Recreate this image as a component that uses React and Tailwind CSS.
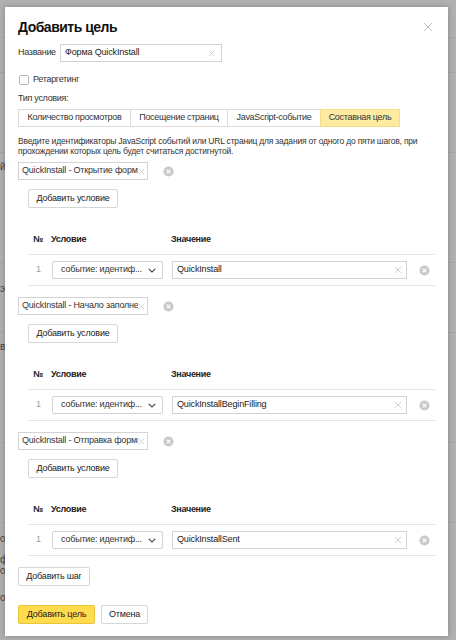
import React from 'react';

const font = { fontFamily: '"Liberation Sans", Arial, sans-serif' };

function CloseSmall({ className = '' }) {
  return (
    <svg viewBox="0 0 10 10" className={className} fill="none" stroke="currentColor" strokeWidth="1">
      <path d="M1 1L9 9M9 1L1 9" />
    </svg>
  );
}

function RemoveCircle() {
  return (
    <svg viewBox="0 0 12 12" className="w-[11px] h-[11px]">
      <circle cx="6" cy="6" r="5.5" fill="#c9c9c9" />
      <path d="M4 4L8 8M8 4L4 8" stroke="#fff" strokeWidth="1.4" />
    </svg>
  );
}

function Chevron() {
  return (
    <svg viewBox="0 0 10 6" className="w-[8px] h-[5px]" fill="none" stroke="#333" strokeWidth="1.3">
      <path d="M1 1L5 5L9 1" />
    </svg>
  );
}

function Button({ children, className = '' }) {
  return (
    <div className={`inline-flex items-center justify-center h-[19px] border border-[#d6d6d6] rounded-[2px] bg-white text-[9px] tracking-[-0.2px] text-[#222] whitespace-nowrap ${className}`}>
      {children}
    </div>
  );
}

function Step({ name, value }) {
  return (
    <div>
      <div className="flex items-center mt-[11px]">
        <div className="w-[130px] h-[18px] border border-[#d3d3d3] flex items-center pl-[3px] pr-[2px] text-[9px] tracking-[-0.2px] text-[#333] overflow-hidden">
          <span className="whitespace-nowrap overflow-hidden flex-1">{name}</span>
          <CloseSmall className="w-[7px] h-[7px] text-[#bdbdbd] shrink-0" />
        </div>
        <div className="ml-[15px] flex items-center"><RemoveCircle /></div>
      </div>
      <div className="flex">
        <Button className="mt-[9px] ml-[10px] w-[90px]">Добавить условие</Button>
      </div>
      <div className="ml-[10px] w-[407px] mt-[24px]">
        <div className="flex items-center pb-[8px] border-b border-[#e6e6e6] text-[9px] tracking-[-0.3px] font-bold text-[#222] leading-[14px]">
          <span className="ml-[5px] w-[18px]">№</span>
          <span className="w-[120px]">Условие</span>
          <span>Значение</span>
        </div>
        <div className="flex items-center h-[31px] border-b border-[#e6e6e6]">
          <span className="ml-[8px] w-[16px] text-[9px] text-[#999]">1</span>
          <div className="w-[111px] h-[18px] border border-[#d3d3d3] rounded-[2px] flex items-center pl-[8px] pr-[6px] text-[9px] tracking-[-0.2px] text-[#333]">
            <span className="flex-1 whitespace-nowrap">событие: идентиф...</span>
            <Chevron />
          </div>
          <div className="ml-[9px] w-[235px] h-[18px] border border-[#d3d3d3] flex items-center pl-[4px] pr-[4px] text-[9px] tracking-[-0.15px] text-[#222]">
            <span className="flex-1">{value}</span>
            <CloseSmall className="w-[8px] h-[8px] text-[#c4c4c4]" />
          </div>
          <div className="ml-[12px] flex items-center"><RemoveCircle /></div>
        </div>
      </div>
    </div>
  );
}

export default function App() {
  const tabs = ['Количество просмотров', 'Посещение страниц', 'JavaScript-событие', 'Составная цель'];
  const widths = ['w-[113px]', 'w-[98px]', 'w-[94px]', 'w-[80px]'];

  return (
    <div className="relative w-[456px] h-[640px] bg-[#b1b1b1] overflow-hidden" style={font}>
      {/* faded page behind the dialog */}
      <div className="flex flex-col pt-[37px]">
        <div className="h-[35px] border-t border-[#a6a6a6]" />
        <div className="h-[80px] border-t border-[#a6a6a6]" />
        <div className="h-[110px] border-t border-[#a6a6a6] text-[10px] text-[#444] pt-[6px]">й</div>
        <div className="h-[70px] border-t border-[#a6a6a6] text-[10px] text-[#444] pt-[18px]">э</div>
        <div className="h-[110px] border-t border-[#a6a6a6] text-[10px] text-[#444] pt-[6px]">в</div>
        <div className="h-[80px] border-t border-[#a6a6a6]" />
        <div className="border-t border-[#a6a6a6] text-[10px] text-[#444] leading-[11px] pt-[10px]">
          <div>о</div>
          <div className="mt-[10px]">ф</div>
          <div>о</div>
          <div className="mt-[16px]">о</div>
        </div>
      </div>

      {/* dialog */}
      <div className="absolute left-[5px] top-[7px] w-[443px] h-[629px] bg-white shadow-[0_0_6px_rgba(0,0,0,0.25)] px-[13px] pt-[10px]">
        <div className="flex items-start justify-between">
          <h1 className="text-[14px] font-bold tracking-[-0.5px] leading-[20px] text-[#111]">Добавить цель</h1>
          <CloseSmall className="w-[10px] h-[10px] text-[#c2c2c2] mt-[5px] mr-[2px]" />
        </div>

        <div className="flex items-center mt-[7px]">
          <span className="text-[9px] tracking-[-0.3px] text-[#333] w-[42px]">Название</span>
          <div className="w-[162px] h-[18px] border border-[#d3d3d3] flex items-center pl-[4px] pr-[6px] text-[9px] tracking-[-0.15px] text-[#222]">
            <span className="flex-1">Форма QuickInstall</span>
            <CloseSmall className="w-[7px] h-[7px] text-[#c4c4c4]" />
          </div>
        </div>

        <div className="flex items-center mt-[11px] h-[14px]">
          <div className="w-[10px] h-[10px] border border-[#b8b8b8] rounded-[2px] ml-[1px]" />
          <span className="ml-[4px] text-[9px] tracking-[-0.3px] text-[#333]">Ретаргетинг</span>
        </div>

        <div className="mt-[5px] text-[9px] tracking-[-0.3px] text-[#333] leading-[12px]">Тип условия:</div>

        <div className="flex mt-[5px] h-[18px]">
          {tabs.map((t, i) => (
            <div
              key={t}
              className={`${widths[i]} flex items-center justify-center whitespace-nowrap text-[9px] tracking-[-0.3px] text-[#333] ${
                i === 3 ? 'bg-[#ffeba0] border border-[#f3dc8a]' : 'border border-[#dcdcdc] -mr-px'
              }`}
            >
              {t}
            </div>
          ))}
        </div>

        <p className="mt-[9px] text-[8.5px] tracking-[-0.2px] leading-[10px] text-[#333] pr-[10px]">
          Введите идентификаторы JavaScript событий или URL страниц для задания от одного до пяти шагов, при прохождении которых цель будет считаться достигнутой.
        </p>

        <div className="-mt-[5px]">
          <Step name="QuickInstall - Открытие формы" value="QuickInstall" />
          <Step name="QuickInstall - Начало заполнения" value="QuickInstallBeginFilling" />
          <Step name="QuickInstall - Отправка формы" value="QuickInstallSent" />
        </div>

        <div className="flex mt-[11px]">
          <Button className="w-[72px]">Добавить шаг</Button>
        </div>

        <div className="flex mt-[19px] gap-[6px]">
          <div className="inline-flex items-center justify-center h-[19px] w-[77px] bg-[#ffdb4d] border border-[#e9c53a] rounded-[2px] text-[9px] tracking-[-0.2px] text-[#222] whitespace-nowrap">
            Добавить цель
          </div>
          <Button className="w-[47px]">Отмена</Button>
        </div>
      </div>
    </div>
  );
}
